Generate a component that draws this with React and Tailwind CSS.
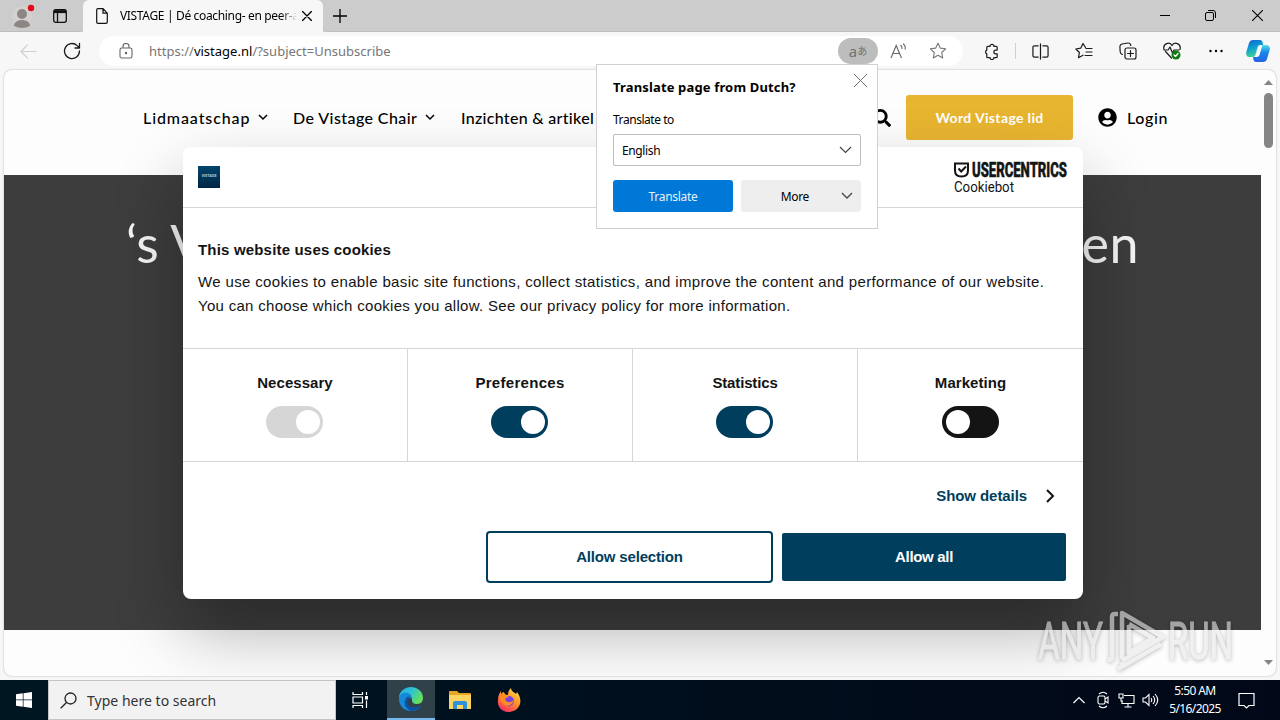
import { FaSearch, FaUserCircle } from "react-icons/fa";

const consents = [
  { label: "Necessary", on: true, track: "bg-[#d6d6d6]", text: "tracking-[0.05px]" },
  { label: "Preferences", on: true, track: "bg-[#003e5e]", text: "tracking-[0.3px]" },
  { label: "Statistics", on: true, track: "bg-[#003e5e]", text: "tracking-[-0.15px]" },
  { label: "Marketing", on: false, track: "bg-[#141414]", text: "tracking-[0.05px]" },
];

const navItems = [
  { label: "Lidmaatschap", box: "w-[107px]", text: "tracking-[0.9px]", gap: "mr-[25px]" },
  { label: "De Vistage Chair", box: "w-[124px]", text: "tracking-[0.42px]", gap: "mr-[26px]" },
];

function Icon({ size = 18, children, className = "", sw = 1.2 }) {
  return (
    <svg
      width={size}
      height={size}
      viewBox="0 0 18 18"
      fill="none"
      stroke="currentColor"
      strokeWidth={sw}
      strokeLinecap="round"
      strokeLinejoin="round"
      className={`shrink-0 ${className}`}
    >
      {children}
    </svg>
  );
}

function Chevron({ className = "", w = 12, sw = 1.5 }) {
  return (
    <svg width={w} height={w / 2 + 2} viewBox={`0 0 ${w} ${w / 2 + 2}`} fill="none" stroke="currentColor" strokeWidth={sw} className={`shrink-0 ${className}`}>
      <path d={`M1 1 L${w / 2} ${w / 2} L${w - 1} 1`} />
    </svg>
  );
}

function TabStrip() {
  return (
    <div className="flex h-8 shrink-0 bg-[#cccccc] text-black">
      <div className="flex w-[83px] items-center rounded-br-md border-b border-[#bdbdbd]">
        <svg width="24" height="26" viewBox="0 0 24 26" className="ml-3">
          <circle cx="10" cy="13" r="10" fill="#d5d1cf" />
          <circle cx="10" cy="11" r="5" fill="#8b8785" />
          <path d="M2 23c0-8 16-8 16 0q-8 4-16 0z" fill="#8b8785" />
          <circle cx="19" cy="5" r="3.2" fill="#e30b17" />
        </svg>
        <svg width="14" height="14" viewBox="0 0 14 14" fill="none" stroke="#111" className="ml-[17px]">
          <rect x=".7" y=".7" width="12.6" height="12.6" rx="2" strokeWidth="1.3" />
          <path d="M1 2.6h12" strokeWidth="3" />
          <path d="M4.5 4v9" strokeWidth="1.3" />
        </svg>
      </div>
      <div className="flex w-[240px] items-center rounded-t-md bg-[#f7f7f7] pl-[13px]">
        <svg width="12" height="16" viewBox="0 0 12 16" fill="none" stroke="#111" strokeWidth="1.2">
          <path d="M2 .7h5l4.3 4.5V14q0 1.3-1.3 1.3H2Q.7 15.3 .7 14V2Q.7.7 2 .7zM7 .7v4.5h4.3" />
        </svg>
        <div className="ml-3 w-[177px] overflow-hidden whitespace-nowrap font-['Noto_Sans',sans-serif] text-[12px] leading-5 tracking-[-0.34px] [mask-image:linear-gradient(90deg,#000_91%,transparent)]">
          VISTAGE | Dé coaching- en peer-a
        </div>
        <Icon size={10} sw={2.4} className="ml-[5px]">
          <path d="M1 1l16 16M17 1L1 17" />
        </Icon>
      </div>
      <div className="flex flex-1 items-center rounded-bl-md border-b border-[#bdbdbd] pl-[10px]">
        <Icon size={14} sw={1.7}>
          <path d="M9 0v18M0 9h18" />
        </Icon>
        <div className="ml-auto mr-[17px] flex items-center">
          <div className="h-px w-[10px] bg-black" />
          <svg width="11" height="11" viewBox="0 0 11 11" fill="none" stroke="#000" className="ml-[35px]">
            <rect x=".5" y="2.5" width="8" height="8" rx="1.5" />
            <path d="M3 .5h5q2.5 0 2.500 2.500v5" />
          </svg>
          <Icon size={11} sw={1.8} className="ml-[36px]">
            <path d="M0 0l18 18M18 0L0 18" />
          </Icon>
        </div>
      </div>
    </div>
  );
}

function Toolbar() {
  const cell = "flex w-11 justify-center";
  return (
    <div className="flex h-[37px] shrink-0 items-center bg-[#f7f7f7] pt-px text-[#1b1b1b]">
      <Icon size={17} className="ml-5 text-[#cfcfcf]">
        <path d="M17 9H1M8 2L1 9l7 7" />
      </Icon>
      <Icon size={18} sw={1.3} className="ml-[26px]">
        <path d="M16.5 9a7.500 7.500 0 1 1-2.300-5.400L16.500 6M16.500 1.500V6H12" />
      </Icon>
      <div className="ml-[18px] flex h-[30px] w-[864px] items-center rounded-full bg-white text-[#777]">
        <svg width="14" height="16" viewBox="0 0 14 16" fill="none" stroke="#666" strokeWidth="1.1" className="ml-5">
          <rect x="1" y="5" width="12" height="10" rx="1.8" />
          <path d="M4 5V3.500a3 3 0 0 1 6 0V5" />
          <circle cx="7" cy="10" r=".7" fill="#666" />
        </svg>
        <div className="ml-4 whitespace-nowrap font-['Noto_Sans',sans-serif] text-[13px] leading-5 tracking-[0.01px] text-[#767676]">
          https://<span className="text-black">vistage.nl</span>/?subject=Unsubscribe
        </div>
        <div className="ml-auto flex h-[26px] w-10 items-center justify-center rounded-full bg-[#bdbdbd] font-['Noto_Sans','Noto_Sans_CJK_JP',sans-serif] text-[#717171]">
          <span className="text-[15px] leading-5">a</span>
          <span className="text-[10px] leading-5">あ</span>
        </div>
        <svg width="18" height="16" viewBox="0 0 18 16" fill="none" stroke="#666" strokeWidth="1.1" className="ml-3">
          <path d="M1 15L6.200 2.500 11.500 15M3 10.500h6.700M10.500 2q2 1.500 1.500 4M13 .8q3 2.200 2 5.700" />
        </svg>
        <Icon size={18} sw={1.1} className="mr-4 ml-[21px]">
          <path d="M9 1.200l2.300 4.900 5.300.7-3.900 3.700 1 5.400L9 13.300l-4.700 2.600 1-5.400L1.400 6.800l5.300-.7z" />
        </Icon>
      </div>
      <Icon size={17} sw={1.3} className="ml-[20px]">
        <path d="M5 3.500h2.500a2 2 0 0 1 4 0H14q1 0 1 1v3h-1.500a2 2 0 0 0 0 4H15v3q0 1-1 1h-2.500a2 2 0 0 1-4 0H5q-1 0-1-1v-3a2.200 2.200 0 0 1 0-4v-3q0-1 1-1z" />
      </Icon>
      <div className="ml-[15px] h-4 w-px bg-[#cfcfcf]" />
      <div className="ml-[2px] flex items-center">
        <div className={cell}>
          <Icon size={17} sw={1.3}>
            <path d="M6.500 3H2.500Q1 3 1 4.500v9Q1 15 2.500 15h4M11.500 3h4Q17 3 17 4.500v9q0 1.500-1.500 1.500h-4M9 1v16" />
          </Icon>
        </div>
        <div className={cell}>
          <Icon size={18}>
            <path d="M10.500 5.500L8 1.500 5.700 6.200.8 7l3.600 3.500-.9 5.200L8 13.200M11 6.500h6M11 10h6M10 13.500h7" />
          </Icon>
        </div>
        <div className={cell}>
          <Icon size={18}>
            <rect x="6" y="6" width="11" height="11" rx="2" />
            <path d="M11.500 8.500v6M8.500 11.500h6M3.500 12.500Q1.500 12 1.200 10L.9 4.500Q1 2.500 3 2l6-1q2-.2 2.500 1.500l.3 1" />
          </Icon>
        </div>
        <div className={cell}>
          <Icon size={18}>
            <path d="M8.500 16L2.500 9.500M1 7.500C-.5 1 7-.5 9 3.500c2-4 9.500-2.500 8 4M1 8h4l2-3 2.500 6L11 8h5" />
            <circle cx="13" cy="13" r="4.500" fill="#107c10" stroke="none" />
            <path d="M11 13l1.500 1.500L15 11.500" stroke="#fff" />
          </Icon>
        </div>
        <div className={cell}>
          <svg width="14" height="4" viewBox="0 0 14 4" className="self-center">
            <circle cx="1.5" cy="2" r="1.2" />
            <circle cx="7" cy="2" r="1.2" />
            <circle cx="12.5" cy="2" r="1.2" />
          </svg>
        </div>
      </div>
      <svg width="24" height="22" viewBox="0 0 24 22" className="ml-2">
        <defs>
          <linearGradient id="copilotLeft" x1="0" y1="0" x2=".3" y2="1">
            <stop offset="0" stopColor="#175fd0" />
            <stop offset=".5" stopColor="#0a9ed2" />
            <stop offset="1" stopColor="#40cf99" />
          </linearGradient>
          <linearGradient id="copilotRight" x1="0" y1="0" x2="0" y2="1">
            <stop offset="0" stopColor="#55d9e8" />
            <stop offset=".45" stopColor="#1787e8" />
            <stop offset="1" stopColor="#2563e5" />
          </linearGradient>
        </defs>
        <path d="M17 22h-7q-2 0-2.500-2L7 17q2 0 2.500-2L12 7q.6-2 2.500-2H20q4.500 0 3.700 5L21 19q-1 3-4 3z" fill="url(#copilotRight)" />
        <path d="M7 0h7q2 0 2.500 2l.7 3h-3q-2 0-2.600 2L9.400 15q-.6 2-2.500 2H4Q-.5 17 .3 12L3 3Q4 0 7 0z" fill="url(#copilotLeft)" />
        <path d="M12 7q.6-2 2.500-2h2l-3 10q-.6 2-2.500 2H7q2 0 2.500-2z" fill="#f4fafc" />
      </svg>
    </div>
  );
}

function SiteHeader() {
  return (
    <div className="flex h-[105px] items-center pb-[10px] pl-[139px] font-[Lato,sans-serif] text-[16px] font-medium text-black">
      {navItems.map((item) => (
        <div key={item.label} className={`flex items-center ${item.gap}`}>
          <span className={`whitespace-nowrap ${item.box} ${item.text}`}>{item.label}</span>
          <Chevron w={10} className="ml-2" />
        </div>
      ))}
      <span className="w-[138px] whitespace-nowrap tracking-[0.3px]">Inzichten &amp; artikel</span>
      <FaSearch size={18} className="ml-[274px]" />
      <div className="ml-[15px] flex h-[45px] w-[167px] items-center justify-center rounded-[3px] bg-[#e8b530] text-[14px] font-bold tracking-[0.35px] text-white">
        Word Vistage lid
      </div>
      <FaUserCircle size={19} className="ml-[25px]" />
      <span className="ml-[10px] tracking-[0.65px]">Login</span>
    </div>
  );
}

function CookieDialog() {
  return (
    <div className="absolute top-[77px] left-[179px] flex h-[452px] w-[900px] flex-col rounded-lg bg-white font-['Liberation_Sans',sans-serif] text-[15px] text-[#141414] shadow-[0_32px_68px_rgba(0,0,0,0.3)]">
      <div className="flex h-[61px] shrink-0 items-center justify-between border-b border-[#d6d6d6] pr-[14px] pl-[15px]">
        <div className="flex size-[22px] items-center justify-center bg-linear-to-b from-[#00456a] to-[#002647]">
          <span className="font-[Inter,sans-serif] text-[3.5px] font-bold text-[#bcd0df]">VISTAGE</span>
        </div>
        <svg width="116" height="34" viewBox="0 0 116 34" fill="#141414" className="font-[Roboto,sans-serif]">
          <path d="M2 3.500h13v7q0 6-6.500 6T2 10.500z" fill="none" stroke="#141414" strokeWidth="2" />
          <path d="M5.500 8.500l2.700 3L13 6.500" fill="none" stroke="#141414" strokeWidth="2" />
          <text x="19" y="17" fontSize="20.500" fontWeight="800" stroke="#141414" strokeWidth=".6" textLength="95" lengthAdjust="spacingAndGlyphs">USERCENTRICS</text>
          <text x="1" y="31.500" fontSize="14.500" textLength="60" lengthAdjust="spacingAndGlyphs">Cookiebot</text>
        </svg>
      </div>
      <div className="h-[140px] shrink-0 pt-8 pl-[15px] whitespace-nowrap">
        <h2 className="text-[15px] leading-5 font-bold tracking-[0.18px]">This website uses cookies</h2>
        <p className="mt-[10px] leading-6 tracking-[0.35px]">
          We use cookies to enable basic site functions, collect statistics, and improve the content and performance of our website.
          <br />
          <span className="tracking-[0.3px]">You can choose which cookies you allow. See our privacy policy for more information.</span>
        </p>
      </div>
      <div className="grid h-[114px] shrink-0 grid-cols-4 border-y border-[#d6d6d6]">
        {consents.map((item) => (
          <div key={item.label} className="flex flex-col items-center border-r border-[#d6d6d6] pt-[23px] last:border-r-0">
            <span className={`leading-[22px] font-bold ${item.text}`}>{item.label}</span>
            <div className={`mt-3 flex h-8 w-[57px] items-center rounded-full ${item.track} ${item.on ? "mr-px justify-end px-[3px]" : "px-1"}`}>
              <div className="size-6 rounded-full bg-white" />
            </div>
          </div>
        ))}
      </div>
      <div className="flex h-[68px] shrink-0 items-center justify-end pr-7 font-bold text-[#003e5e]">
        <span className="tracking-[-0.08px]">Show details</span>
        <svg width="9" height="14" viewBox="0 0 9 14" fill="none" stroke="#141414" strokeWidth="2" className="ml-[19px]">
          <path d="M1 1l6 6-6 6" />
        </svg>
      </div>
      <div className="mt-px flex items-center justify-end gap-[9px] pr-[17px] font-bold">
        <div className="flex h-[52px] w-[287px] items-center justify-center rounded-[4px] border-2 border-[#003e5e] tracking-[-0.17px] text-[#003e5e]">
          Allow selection
        </div>
        <div className="flex h-12 w-[284px] items-center justify-center rounded-[2px] bg-[#003e5e] tracking-[-0.32px] text-white">Allow all</div>
      </div>
    </div>
  );
}

function TranslatePopup() {
  return (
    <div className="absolute top-[64px] left-[596px] h-[165px] w-[282px] border border-[#d0d0d0] bg-white px-4 font-['Noto_Sans',sans-serif] text-[12px] text-black">
      <Icon size={13} sw={1.3} className="absolute top-[9px] right-[10px] text-[#666]">
        <path d="M0 0l18 18M18 0L0 18" />
      </Icon>
      <div className="mt-3 text-[13px] leading-5 font-bold tracking-[0.15px] whitespace-nowrap">Translate page from Dutch?</div>
      <div className="mt-[15px] leading-4 tracking-[-0.45px]">Translate to</div>
      <div className="mt-[6px] flex h-8 items-center justify-between rounded-[2px] border border-[#bdbdbd] pr-2 pl-2">
        <span className="pt-px tracking-[-0.38px]">English</span>
        <Chevron w={13} sw={1.2} className="text-[#444]" />
      </div>
      <div className="mt-[14px] flex gap-2">
        <div className="flex h-8 w-[120px] items-center justify-center rounded-[3px] bg-[#0078d7] pt-px tracking-[-0.3px] text-[#e6f2fc]">Translate</div>
        <div className="flex h-8 w-[120px] items-center justify-end rounded-[3px] bg-[#eeeeee] pr-2">
          <span className="pt-px tracking-[-0.35px]">More</span>
          <Chevron w={12} sw={1.3} className="ml-[32px] text-[#444]" />
        </div>
      </div>
    </div>
  );
}

function Watermark() {
  return (
    <svg
      width="204"
      height="70"
      viewBox="0 0 204 70"
      className="absolute top-[605px] left-[1034px] font-[Roboto,sans-serif] opacity-60 drop-shadow-[0_1px_2px_rgba(0,0,0,0.45)]"
      fill="#e9e9e9"
    >
      <text x="4" y="54" fontSize="52" fontWeight="400" stroke="#e9e9e9" strokeWidth="1" textLength="65" lengthAdjust="spacingAndGlyphs">ANY</text>
      <text x="134" y="54" fontSize="52" fontWeight="400" stroke="#e9e9e9" strokeWidth="1" textLength="65" lengthAdjust="spacingAndGlyphs">RUN</text>
      <g fill="none" stroke="#e9e9e9" strokeWidth="4.500" strokeLinejoin="round">
        <path d="M84 9h-3q-3 0-3 3v40q0 3-4 3" />
        <path d="M88 54V8l41 24-41 24M95 20v28l24-15-24-14" />
        <path d="M84 64l43-25M88 57v5" />
      </g>
    </svg>
  );
}

function PageView() {
  return (
    <div className="relative mx-1 flex h-[606px] overflow-hidden rounded-lg bg-[#fdfdfd] shadow-[0_0_2px_rgba(0,0,0,0.3)]">
      <div className="w-[1257px]">
        <SiteHeader />
        <div className="flex h-[455px] justify-between bg-[#3d3d3d] pt-9 pr-[122px] pl-[122px] font-[Lato,sans-serif] text-[52px] leading-[64px] text-[#f4f4f4]">
          <span>‘s V</span>
          <span className="tracking-[0.5px]">en</span>
        </div>
      </div>
      <CookieDialog />
      <div className="relative flex flex-1 flex-col items-center pt-[10px] pb-[10px]">
        <svg width="9" height="6" viewBox="0 0 9 6" fill="#858585">
          <path d="M4.500 0L9 5H0z" />
        </svg>
        <div className="mt-[7px] h-[55px] w-[9px] rounded-full bg-[#858585]" />
        <svg width="9" height="6" viewBox="0 0 9 6" fill="#858585" className="mt-auto">
          <path d="M0 0h9L4.500 5z" />
        </svg>
      </div>
    </div>
  );
}

function Taskbar() {
  return (
    <div className="flex h-10 shrink-0 items-center bg-linear-to-r from-[#001722] via-[#000f1d] to-[#020817] font-['Noto_Sans',sans-serif] text-white">
      <svg width="16" height="16" viewBox="0 0 16 16" fill="#fff" className="mx-4">
        <path d="M0 2.300L6.800 1.300v6.300H0zM7.500 1.200L16 0v7.600H7.500zM0 8.300h6.800v6.400L0 13.700zM7.500 8.300H16V16l-8.500-1.200z" />
      </svg>
      <div className="flex h-10 w-72 items-center border border-[#c5c5c5] bg-[#f2f2f2] pl-[11px]">
        <svg width="17" height="17" viewBox="0 0 17 17" fill="none" stroke="#222" strokeWidth="1.3">
          <circle cx="10.5" cy="6.5" r="5.5" />
          <path d="M6.500 10.500L.7 16.300" />
        </svg>
        <span className="ml-[10px] text-[14px] tracking-[0.02px] text-[#333]">Type here to search</span>
      </div>
      <svg width="17" height="16" viewBox="0 0 17 16" fill="none" stroke="#fff" strokeWidth="1.2" className="ml-4">
        <path d="M1 0v2.500h9.500V0M1 16v-2.500h9.500V16M1 5h9.500v6H1zM14.500 0v3M14.500 8.500V16" />
        <path d="M14.500 4v3.500" strokeWidth="3" />
      </svg>
      <div className="ml-[18px] flex h-10 w-12 items-center justify-center border-b-2 border-[#76b9ed] bg-[#304149]">
        <svg width="24" height="24" viewBox="0 0 24 24">
          <defs>
            <linearGradient id="edgeTop" x1="0" y1="0" x2="1" y2=".5">
              <stop offset="0" stopColor="#23a8ec" />
              <stop offset=".55" stopColor="#30c6cc" />
              <stop offset="1" stopColor="#66df59" />
            </linearGradient>
          </defs>
          <path d="M12 0C5 0 0 5 0 11c3-5 13-5 13 2 0 3 2 4 5 4 4 0 6-3 6-6C24 4 18 0 12 0z" fill="url(#edgeTop)" />
          <path d="M0 12C0 4 13 4 13 11c-3-1-5 1-5 4 0 5 7 8 14 4-3 4-6 5-10 5C5 24 0 19 0 12z" fill="#1688d8" />
          <path d="M8 10c-4 4-3 11 4 14 4 0 8-2 10-5-7 3-14 1-14-4 0-2 1-4 3-5q-2-1-3 0z" fill="#0b50a3" />
        </svg>
      </div>
      <svg width="22" height="20" viewBox="0 0 22 20" className="ml-[14px]">
        <path d="M0 1.500Q0 1 .8 1H8l2 2h11q1 0 1 1v14H0z" fill="#e6a624" />
        <path d="M0 5h22v14H0z" fill="#fcd462" />
        <path d="M4 19v-6q0-2 2-2h10q2 0 2 2v6h-4v-4H8v4z" fill="#2f91d8" />
      </svg>
      <svg width="24" height="24" viewBox="0 0 24 24" className="ml-[26px]">
        <defs>
          <linearGradient id="foxFire" x1=".8" y1="0" x2=".2" y2="1">
            <stop offset="0" stopColor="#ffe14a" />
            <stop offset=".45" stopColor="#ff9328" />
            <stop offset="1" stopColor="#f5276b" />
          </linearGradient>
        </defs>
        <path d="M14 0c0 3 3 4 5 6l1-2c3 4 4 8 3 12-2 6-7 8-12 8C4 24 0 18 1 12c0-4 1-6 3-9v3q2-2 3-2c0 2 2 3 4 3 0-3 1-5 3-7z" fill="url(#foxFire)" />
        <circle cx="12" cy="13" r="5" fill="#7542e5" />
        <path d="M3 8c4-2 7-1 9 1-2 0-3 1-4 2 1 4 6 4 9 1-1 6-8 7-11 4-2-2-3-5-3-8z" fill="#ff8c22" />
      </svg>
      <div className="ml-auto flex items-center">
        <svg width="12" height="8" viewBox="0 0 12 8" fill="none" stroke="#fff" strokeWidth="1.2">
          <path d="M.5 7L6 1.500 11.500 7" />
        </svg>
        <svg width="12" height="18" viewBox="0 0 12 18" fill="none" stroke="#fff" strokeWidth="1.1" className="ml-3">
          <rect x="1" y="5" width="7" height="8" rx="1.5" />
          <path d="M8 8l3-2v6l-3-2M2 3q4-3.500 8 0M2 15q4 3.500 8 0" />
        </svg>
        <svg width="17" height="15" viewBox="0 0 17 15" fill="none" stroke="#fff" strokeWidth="1.1" className="ml-[9px]">
          <path d="M6 2.500h10v8H4V8M10 10.500V14M6.500 14h7M1 1h4v4H1zM3 5v3h2" />
        </svg>
        <svg width="17" height="14" viewBox="0 0 17 14" fill="none" stroke="#fff" strokeWidth="1.1" className="ml-[7px]">
          <path d="M1 5h2.500L7 1.500v11L3.500 9H1zM9 5q1.500 2 0 4M11 3q3.500 4 0 8M13 1q5.500 6 0 12" />
        </svg>
        <div className="ml-[6px] w-[60px] text-center text-[12px] leading-[18px] tracking-[-0.6px] whitespace-nowrap">
          5:50 AM
          <br />
          5/16/2025
        </div>
        <svg width="17" height="17" viewBox="0 0 17 17" fill="none" stroke="#fff" strokeWidth="1.2" className="mr-[25px] ml-[13px]">
          <path d="M1 1.500h15v12h-5L8.500 16 6 13.500H1z" />
        </svg>
      </div>
    </div>
  );
}

export default function App() {
  return (
    <div className="relative flex h-[720px] w-[1280px] flex-col overflow-hidden bg-[#f7f7f7]">
      <TabStrip />
      <Toolbar />
      <div className="flex-1 pt-px">
        <PageView />
      </div>
      <Taskbar />
      <TranslatePopup />
      <Watermark />
    </div>
  );
}
